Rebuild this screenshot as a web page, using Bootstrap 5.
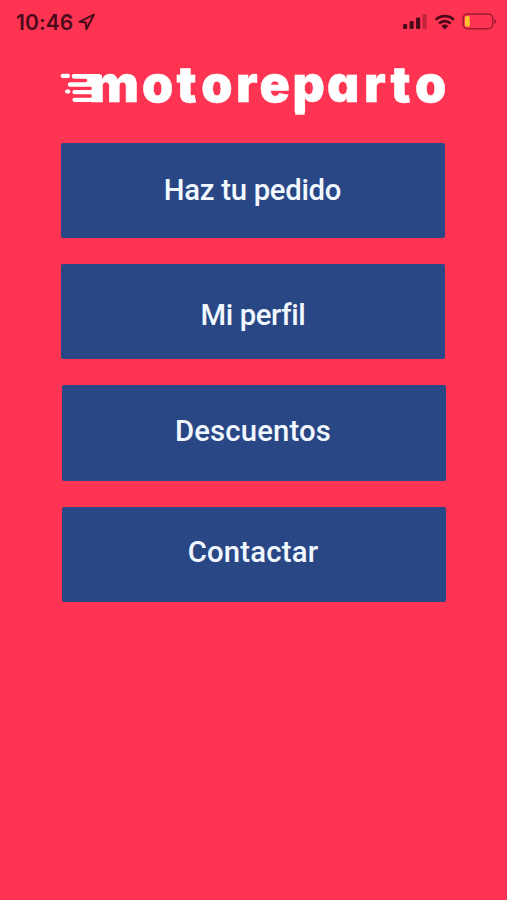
<!DOCTYPE html>
<html lang="es">
<head>
<meta charset="utf-8">
<meta name="viewport" content="width=device-width, initial-scale=1">
<title>motoreparto</title>
<link rel="stylesheet" href="https://cdn.jsdelivr.net/npm/bootstrap@5.3.0/dist/css/bootstrap.min.css">
<style>
  body { background: #ff3352; font-family: Roboto, "Liberation Sans", sans-serif; overflow: hidden; }
  .status-bar { height: 45px; padding: 0 10px 2px 16px; color: #4a0a1a; }
  .clock { font: 600 21px/1 Inter, sans-serif; letter-spacing: .1px; padding-top: 1px; }
  .brand { height: 97.5px; }
  .brand text { font: 900 50px Inter, sans-serif; font-feature-settings: "cv11"; }
  .menu { padding: 0 61px 0 61px; gap: 25.8px; }
  .menu .btn {
    --bs-btn-bg: #294785; --bs-btn-color: #f2f8ff; --bs-btn-hover-bg: #223c72; --bs-btn-hover-color: #fff;
    --bs-btn-border-width: 0; --bs-btn-border-radius: 2px;
    width: 384px; height: 95.6px; padding: 0; font-weight: 500; font-size: 29.3px; line-height: 34px;
  }
  .menu .shifted { margin-left: 1px; }
  .w-pedido { letter-spacing: -.3px; padding: 0 1px 0 0 !important; }
  .w-perfil { letter-spacing: -.4px; padding-top: 7px !important; }
  .w-descuentos { letter-spacing: .15px; padding: 0 2px 4px 0 !important; }
  .w-contactar { letter-spacing: .2px; padding: 0 2px 5px 0 !important; }
</style>
<script src="https://cdn.jsdelivr.net/npm/bootstrap@5.3.0/dist/js/bootstrap.bundle.min.js"></script>
</head>
<body class="vh-100 d-flex flex-column">
  <header class="status-bar d-flex align-items-center justify-content-between">
    <div class="d-flex align-items-center">
      <span class="clock">10:46</span>
      <svg class="ms-1" width="19" height="18" viewBox="0 0 19 18" fill="none" stroke="#4a0a1a" stroke-width="2" stroke-linejoin="round"><path d="M17 1.600 2.300 8.800l6.600.7.5 6.700z"/></svg>
    </div>
    <svg width="96" height="24" viewBox="401 10 96 24" aria-label="Señal, wifi y batería">
      <g fill="#4a0a1a">
        <rect x="403" y="24" width="4.200" height="5" rx="1.200"/>
        <rect x="409.500" y="21" width="4.200" height="8" rx="1.200"/>
        <rect x="416" y="17.500" width="4.200" height="11.500" rx="1.200"/>
        <rect x="422.500" y="14" width="4.200" height="15" rx="1.200" opacity=".35"/>
        <path d="M444.800 29.500 441.300 25.900a5 5 0 0 1 7 0z"/>
      </g>
      <g fill="none" stroke="#4a0a1a" stroke-width="2.700">
        <path d="M435.700 19.900a13 13 0 0 1 18.200 0M439 23.500a8.400 8.400 0 0 1 11.600 0"/>
      </g>
      <rect x="463.100" y="14" width="29.600" height="14.800" rx="4.300" fill="none" stroke="#4a0a1a" stroke-opacity=".55" stroke-width="1.400"/>
      <path d="M494.300 19v5q2-.7 2-2.500t-2-2.500z" fill="#4a0a1a" opacity=".5"/>
      <rect x="465" y="16" width="4.800" height="10.800" rx="1.700" fill="#ffc22e"/>
    </svg>
  </header>

  <div class="brand">
    <svg class="d-block" width="507" height="80" viewBox="0 45 507 80" fill="#fff">
      <!-- speed streaks running into the first letter -->
      <rect x="60.700" y="73.800" width="9.300" height="4.200" rx="2"/>
      <rect x="65" y="89.600" width="5.400" height="4" rx="2"/>
      <path d="M74 74h26v28H74.500a2 2 0 0 1 0-4.300H90.500a1.200 1.200 0 0 0 0-3.400H74.500a2.100 2.100 0 0 1 0-4.400H90.500a1.200 1.200 0 0 0 0-3.200H70a2 2 0 0 1 0-4.500H85.500a1.200 1.200 0 0 0 0-3.500H74a2.100 2.100 0 0 1 0-4.700z"/>
      <g stroke="#fff" stroke-width=".5">
        <text transform="translate(89.500 101.500) scale(1.050 1)">m</text>
        <text y="101.500" x="142 176.500 201.200 236 259.500">otore</text>
        <text y="101.500" x="292.500 327 364 390.500 415">parto</text>
        <!-- longer descender of the p -->
        <rect x="295.500" y="106" width="9" height="8.500"/>
      </g>
    </svg>
  </div>

  <nav class="menu d-flex flex-column">
    <a href="#" class="btn d-flex align-items-center justify-content-center w-pedido">Haz tu pedido</a>
    <a href="#" class="btn d-flex align-items-center justify-content-center w-perfil">Mi perfil</a>
    <a href="#" class="btn shifted d-flex align-items-center justify-content-center w-descuentos">Descuentos</a>
    <a href="#" class="btn shifted d-flex align-items-center justify-content-center w-contactar">Contactar</a>
  </nav>
</body>
</html>
